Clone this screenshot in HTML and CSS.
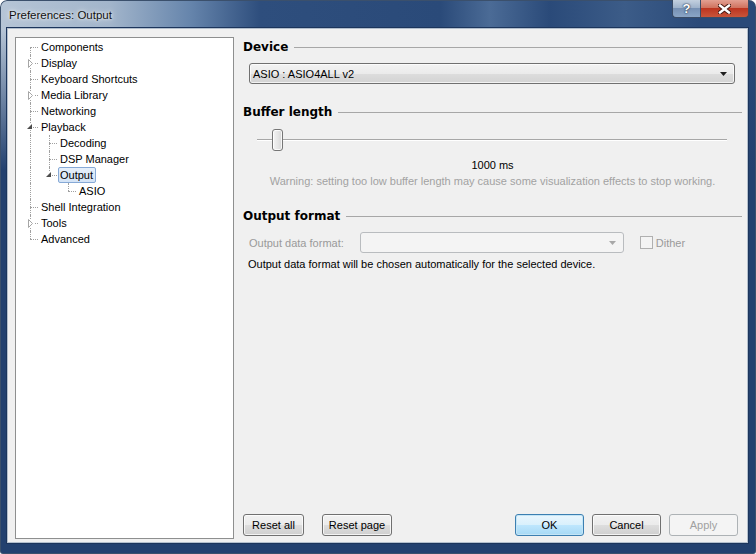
FILE: index.html
```html
<!DOCTYPE html>
<html lang="en">
<head>
  <meta charset="UTF-8" />
  <title>Preferences: Output</title>
  <link rel="stylesheet" href="styles.css">
</head>
<body>

  <div class="window">
    <div class="titlebar">
      <span class="title">Preferences: Output</span>
      <div class="caption-btns">
        <span class="cbtn help">?</span>
        <span class="cbtn close">
          <svg width="13" height="10" viewBox="0 0 13 10">
            <path d="M2 1.5 L11 8.5 M11 1.5 L2 8.5" stroke="#4a1a12" stroke-width="4.4" stroke-linecap="square" fill="none"/>
            <path d="M2 1.5 L11 8.5 M11 1.5 L2 8.5" stroke="#fff" stroke-width="2.4" stroke-linecap="square" fill="none"/>
          </svg>
        </span>
      </div>
    </div>

    <div class="client">
      <div class="tree">
        <div class="row"><span class="g f"></span><span class="lbl">Components</span></div>
        <div class="row"><span class="g t"><svg class="exp closed" width="6" height="9"><path d="M0.5 0.5 L4.5 4.5 L0.5 8.5 Z" fill="#fff" stroke="#a6a6a6"/></svg></span><span class="lbl">Display</span></div>
        <div class="row"><span class="g t"></span><span class="lbl">Keyboard Shortcuts</span></div>
        <div class="row"><span class="g t"><svg class="exp closed" width="6" height="9"><path d="M0.5 0.5 L4.5 4.5 L0.5 8.5 Z" fill="#fff" stroke="#a6a6a6"/></svg></span><span class="lbl">Media Library</span></div>
        <div class="row"><span class="g t"></span><span class="lbl">Networking</span></div>
        <div class="row"><span class="g t"><svg class="exp open" width="6" height="6"><path d="M5 0 L5 5 L0 5 Z" fill="#4d4d4d"/></svg></span><span class="lbl">Playback</span></div>
        <div class="row"><span class="g v"></span><span class="g t"></span><span class="lbl">Decoding</span></div>
        <div class="row"><span class="g v"></span><span class="g t"></span><span class="lbl">DSP Manager</span></div>
        <div class="row"><span class="g v"></span><span class="g l"><svg class="exp open" width="6" height="6"><path d="M5 0 L5 5 L0 5 Z" fill="#4d4d4d"/></svg></span><span class="lbl sel">Output</span></div>
        <div class="row"><span class="g v"></span><span class="g"></span><span class="g l"></span><span class="lbl">ASIO</span></div>
        <div class="row"><span class="g t"></span><span class="lbl">Shell Integration</span></div>
        <div class="row"><span class="g t"><svg class="exp closed" width="6" height="9"><path d="M0.5 0.5 L4.5 4.5 L0.5 8.5 Z" fill="#fff" stroke="#a6a6a6"/></svg></span><span class="lbl">Tools</span></div>
        <div class="row"><span class="g l"></span><span class="lbl">Advanced</span></div>
      </div>

      <div class="panel">
        <div class="head head-device">Device</div>
        <div class="combo">
          <span>ASIO : ASIO4ALL v2</span>
          <svg width="7" height="4"><path d="M0 0 L7 0 L3.5 4 Z" fill="#1e1e1e"/></svg>
        </div>

        <div class="head head-buffer">Buffer length</div>
        <div class="slider"><div class="thumb"></div></div>
        <div class="ms">1000 ms</div>
        <div class="warning">Warning: setting too low buffer length may cause some visualization effects to stop working.</div>

        <div class="head head-format">Output format</div>
        <div class="format-row">
          <span class="dim-label">Output data format:</span>
          <div class="combo disabled">
            <span></span>
            <svg width="7" height="4"><path d="M0 0 L7 0 L3.5 4 Z" fill="#a8a8a8"/></svg>
          </div>
          <span class="check"></span>
          <span class="dim-label">Dither</span>
        </div>
        <div class="info">Output data format will be chosen automatically for the selected device.</div>

        <div class="buttons">
          <button class="btn w-reset">Reset all</button>
          <button class="btn w-page">Reset page</button>
          <span class="spacer"></span>
          <button class="btn default">OK</button>
          <button class="btn">Cancel</button>
          <button class="btn disabled">Apply</button>
        </div>
      </div>
    </div>
  </div>

</body>
</html>
```

FILE: styles.css
```css
* { margin: 0; padding: 0; box-sizing: border-box; }
html, body { width: 756px; height: 554px; overflow: hidden; background: #fff; }
body { font-family: "Liberation Sans", Arial, sans-serif; font-size: 11px; color: #000; }

.window {
  width: 756px; height: 554px; display: flex; flex-direction: column;
  padding: 0 8px 11px 7px; border-radius: 7px 7px 3px 3px;
  background:
    linear-gradient(to bottom, rgba(35, 65, 111, 0) 30px, #23416f 170px),
    linear-gradient(to right, #b6c5d6 0, #a2b5cb 110px, #6685ac 190px, #2e4e7d 260px, #2a4a79 440px,
      #4b6b96 490px, #2a4a79 550px, #3c5c88 625px, #2a4a79 700px);
  box-shadow: inset 0 0 0 1px #3b506c;
}

/* title bar */
.titlebar { height: 28px; display: flex; align-items: flex-start; padding-left: 2px; }
.title {
  line-height: 30px; font-size: 11.5px; color: #111;
  text-shadow: 0 0 6px rgba(255, 255, 255, 0.9), 0 0 3px rgba(255, 255, 255, 0.8);
}
.caption-btns { margin-left: auto; margin-right: -1px; display: flex; }
.cbtn {
  height: 18px; display: flex; align-items: center; justify-content: center;
  border: 1px solid #3a4c66; border-top: none;
}
.help {
  width: 28px; border-right: none; border-radius: 0 0 0 4px;
  color: #fff; font-weight: bold; font-size: 13px; text-shadow: 0 0 2px #1b2c45, 0 0 1px #1b2c45;
  background: linear-gradient(#c3d0df, #9fb3cb 45%, #7791b4 50%, #8aa5c6);
}
.close {
  width: 49px; border-radius: 0 0 4px 0;
  background: linear-gradient(#e3a092, #d0735f 45%, #bd3520 50%, #c9553a);
}

/* client area */
.client {
  flex: 1; display: flex; background: #f0f0f0;
  border: 1px solid #b3bfcd; box-shadow: 0 0 0 1px #1c355c;
  padding: 8px 5px 3px 7px;
}

/* tree */
.tree {
  width: 219px; flex: none; background: #fff; border: 1px solid #8e8f8f;
  padding: 1px 0 0 4px;
}
.row { display: flex; align-items: center; height: 16px; }
.g { width: 19px; height: 16px; flex: none; position: relative; }
.g.v::before, .g.t::before, .g.l::before, .g.f::before {
  content: ''; position: absolute; left: 10px; top: 0; bottom: 0; border-left: 1px dotted #a0a0a0;
}
.g.l::before { bottom: 8px; }
.g.f::before { top: 8px; }
.g.t::after, .g.l::after, .g.f::after {
  content: ''; position: absolute; left: 10px; top: 8px; width: 8px; border-top: 1px dotted #a0a0a0;
}
.exp { position: absolute; z-index: 1; background: #fff; }
.exp.closed { left: 8px; top: 4px; }
.exp.open { left: 7px; top: 5px; }
.lbl { line-height: 14px; padding: 0 2px 0 1px; border: 1px solid transparent; white-space: nowrap; }
.lbl.sel {
  background: linear-gradient(#e6effa, #d3e3f6); border-color: #86a9d6; border-radius: 2px;
}

/* right panel */
.panel { flex: 1; display: flex; flex-direction: column; margin-left: 9px; }
.head {
  display: flex; align-items: center; height: 16px; gap: 6px;
  font-family: "DejaVu Sans", sans-serif; font-weight: bold; font-size: 12px;
}
.head::after { content: ''; flex: 1; border-top: 1px solid #a7a7a7; margin-top: 1px; }
.head-device { margin-top: 2px; }
.head-buffer { margin-top: 20px; }
.head-format { margin-top: 19px; }

.combo {
  height: 21px; display: flex; align-items: center; justify-content: space-between;
  padding: 0 7px 0 3px; border: 1px solid #707070; border-radius: 3px;
  background: linear-gradient(#f3f3f3, #ebebeb 50%, #dddddd 51%, #d3d3d3);
  box-shadow: inset 0 0 0 1px rgba(255, 255, 255, 0.7);
}
.panel > .combo { margin: 8px 7px 0 6px; }
.combo.disabled {
  width: 264px; border-color: #b9bcbf; background: #f4f4f4; box-shadow: none; padding-right: 7px;
}

.slider {
  height: 22px; margin: 9px 15px 0 14px; display: flex; align-items: center;
  background:
    linear-gradient(#a7a7a7, #a7a7a7) left 10px / 100% 1px no-repeat,
    linear-gradient(#fff, #fff) left 11px / 100% 1px no-repeat;
}
.thumb {
  width: 11px; height: 22px; margin-left: 15px; border: 1px solid #767676; border-radius: 3px;
  background: linear-gradient(to right, #f4f4f4, #e4e4e4 60%, #d6d6d6);
  box-shadow: inset 0 0 0 1px rgba(255, 255, 255, 0.8);
}
.ms { margin-top: 6px; line-height: 16px; text-align: center; }
.warning { line-height: 16px; text-align: center; color: #a2a2a2; }

.format-row { display: flex; align-items: center; height: 21px; margin: 8px 0 0 6px; }
.dim-label { color: #9a9a9a; }
.format-row .combo { margin-left: 16px; }
.check {
  width: 13px; height: 13px; margin: 0 3px 0 16px; border: 1px solid #b0b0b0;
  background: #f4f4f4;
}
.info { margin: 3px 0 0 5px; line-height: 16px; }

/* bottom buttons */
.buttons { margin-top: auto; margin-bottom: 3px; display: flex; gap: 8px; padding-right: 4px; }
.spacer { flex: 1; }
.btn {
  width: 69px; height: 22px; font-family: inherit; font-size: 11px; color: #000;
  border: 1px solid #707070; border-radius: 3px;
  background: linear-gradient(#f2f2f2, #ebebeb 50%, #dddddd 51%, #cfcfcf);
  box-shadow: inset 0 0 0 1px rgba(255, 255, 255, 0.75);
}
.btn.w-reset { width: 61px; }
.btn.w-page { width: 70px; margin-left: 10px; }
.btn.default {
  border-color: #3c7fb1;
  background: linear-gradient(#eaf6fd, #d9f0fc 50%, #bee6fd 51%, #a7d9f5);
  box-shadow: inset 0 0 0 1px #c4e5f6;
}
.btn.disabled {
  border-color: #adb2b5; background: #f4f4f4; color: #a0a0a0; box-shadow: none;
}
```
